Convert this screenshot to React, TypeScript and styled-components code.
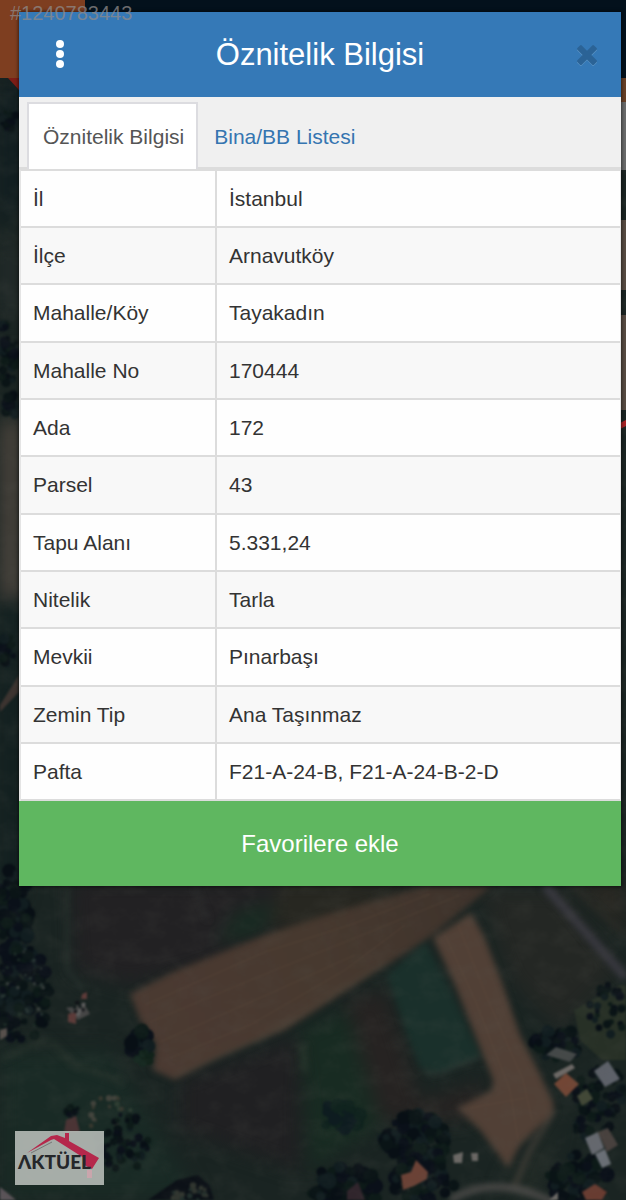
import React from 'react';
import styled, { createGlobalStyle } from 'styled-components';

const GlobalStyle = createGlobalStyle`
  * { box-sizing: border-box; }
  body { margin: 0; background: #171d1d; font-family: 'Liberation Sans', Arial, sans-serif; }
`;

const Page = styled.div`
  position: relative;
  min-height: 100vh;
  overflow: hidden;
  padding: 12px 5px 0 19px;
`;

const MapSvg = styled.svg`
  position: absolute;
  inset: 0;
  width: 100%;
  height: 100%;
`;

const ListingNumber = styled.span`
  position: absolute;
  z-index: 2;
  top: 2px;
  left: 10px;
  font-size: 20px;
  line-height: 23px;
  color: rgba(142, 138, 138, 0.75);
`;

const Dialog = styled.section`
  position: relative;
  background: #fff;
  box-shadow: 0 0 3px 1px rgba(0, 0, 0, 0.5);
`;

const Header = styled.header`
  display: grid;
  grid-template-columns: 1fr auto 1fr;
  align-items: center;
  height: 85px;
  padding: 0 20px;
  background: #3579b7;
`;

const Title = styled.h1`
  margin: 0;
  font-size: 31px;
  line-height: 40px;
  font-weight: 400;
  color: #fff;
`;

const IconButton = styled.button<{ $side: 'start' | 'end' }>`
  display: flex;
  justify-self: ${(p) => p.$side};
  padding: ${(p) => (p.$side === 'start' ? '0 6px' : '0')};
  border: 0;
  background: none;
  cursor: pointer;
`;

const TabBar = styled.nav`
  display: flex;
  height: 72px;
  padding: 5px 8px 0;
  border-bottom: 2px solid #dcdcdc;
  background: #f0f0f0;
`;

const Tab = styled.button<{ $active?: boolean }>`
  height: 67px;
  padding: 0 12px 0 14px;
  border: 2px solid ${(p) => (p.$active ? '#dcdce0' : 'transparent')};
  border-bottom: 0;
  background: ${(p) => (p.$active ? '#fff' : 'transparent')};
  color: ${(p) => (p.$active ? '#555' : '#3575b0')};
  font: inherit;
  font-size: 21px;
  cursor: pointer;
`;

const Table = styled.table`
  width: 100%;
  border-collapse: separate;
  border-spacing: 0;
  border-top: 2px solid #dcdcdc;
  border-left: 2px solid #e4e4e4;
  border-right: 1px solid #e4e4e4;
  font-size: 21px;
  line-height: 24px;
  color: #333;
`;

const Row = styled.tr`
  height: 57px;
  background: #fefefe;
  &:nth-child(even) { background: #f8f8f8; }
  &:nth-child(3n) { height: 58px; }
`;

const Label = styled.th`
  width: 196px;
  padding: 0 12px;
  border-right: 2px solid #dcdcdc;
  border-bottom: 2px solid #dcdcdc;
  font-weight: 400;
  text-align: left;
`;

const Value = styled.td`
  padding: 0 12px;
  border-bottom: 2px solid #dcdcdc;
`;

const FavoriteButton = styled.button`
  display: block;
  width: 100%;
  height: 85px;
  padding: 0;
  border: 0;
  background: #5fb760;
  color: #fff;
  font: inherit;
  font-size: 24px;
  cursor: pointer;
`;

const Badge = styled.div`
  position: absolute;
  left: 15px;
  bottom: 15px;
  width: 89px;
  height: 54px;
  background: rgba(190, 195, 190, 0.86);
`;

const rows: [string, string][] = [
  ['İl', 'İstanbul'],
  ['İlçe', 'Arnavutköy'],
  ['Mahalle/Köy', 'Tayakadın'],
  ['Mahalle No', '170444'],
  ['Ada', '172'],
  ['Parsel', '43'],
  ['Tapu Alanı', '5.331,24'],
  ['Nitelik', 'Tarla'],
  ['Mevkii', 'Pınarbaşı'],
  ['Zemin Tip', 'Ana Taşınmaz'],
  ['Pafta', 'F21-A-24-B, F21-A-24-B-2-D'],
];

type GroveProps = { cx: number; cy: number; rx: number; ry: number; count: number; size: number; seed: number; colors?: string[] };

const treeColors = ['#080f15', '#0a1416', '#0d1a18', '#111d20', '#0a1019'];

// Scatters tree crowns over an ellipse, the same way on every render.
function Grove({ cx, cy, rx, ry, count, size, seed, colors = treeColors }: GroveProps) {
  let state = seed;
  const next = () => {
    state = (state * 16807) % 2147483647;
    return state / 2147483647;
  };
  next();
  const trees = Array.from({ length: count }, (_, i) => {
    const angle = next() * Math.PI * 2;
    const reach = Math.sqrt(next());
    return (
      <circle
        key={i}
        cx={cx + Math.cos(angle) * rx * reach}
        cy={cy + Math.sin(angle) * ry * reach}
        r={size * (0.5 + next() * 0.6)}
        fill={colors[i % colors.length]}
      />
    );
  });
  return <g>{trees}</g>;
}

function SatelliteMap() {
  return (
    <MapSvg viewBox="0 0 626 1200" preserveAspectRatio="xMidYMin slice" aria-hidden="true">
      <defs>
        <filter id="soft" x="-20%" y="-20%" width="140%" height="140%" colorInterpolationFilters="sRGB"><feGaussianBlur stdDeviation="9" /></filter>
        <filter id="edge" x="-10%" y="-10%" width="120%" height="120%" colorInterpolationFilters="sRGB"><feGaussianBlur stdDeviation="3" /></filter>
        <filter id="fine" x="-10%" y="-10%" width="120%" height="120%" colorInterpolationFilters="sRGB"><feGaussianBlur stdDeviation="1" /></filter>
        <filter id="grain" x="0" y="0" width="100%" height="100%" colorInterpolationFilters="sRGB">
          <feTurbulence type="fractalNoise" baseFrequency="0.043 0.057" numOctaves="4" seed="5" />
          <feColorMatrix values="0 0 0 0 0.36  0 0 0 0 0.36  0 0 0 0 0.33  1.6 0 0 0 -0.65" />
        </filter>
        <linearGradient id="field" x1="140" y1="1040" x2="500" y2="880" gradientUnits="userSpaceOnUse">
          <stop offset="0" stopColor="#4b3a32" />
          <stop offset="0.5" stopColor="#47392f" />
          <stop offset="1" stopColor="#3d322b" />
        </linearGradient>
      </defs>
      <rect width="626" height="1200" fill="#1a2422" />
      <g filter="url(#soft)">
        <path d="M0 80H22V200L0 240Z" fill="#101d20" />
        <path d="M0 240H22V320H0Z" fill="#222a29" />
        <path d="M0 420H22V600H0Z" fill="#49433c" />
        <path d="M0 600H22V900H0Z" fill="#122020" />
        <path d="M70 880H320L270 950L130 985L75 970Z" fill="#222123" />
        <path d="M235 912L275 900L265 935L215 945Z" fill="#182a22" />
        <path d="M280 880H430L310 945L270 925Z" fill="#272721" />
        <path d="M180 1080L300 1035V1170L180 1130Z" fill="#202022" />
        <path d="M0 1050H110L200 1200H0Z" fill="#192a25" />
        <path d="M300 1030L350 1010L390 1120L310 1170Z" fill="#182b22" />
        <path d="M345 1000L385 990L420 1100L490 1080L470 1120L380 1120Z" fill="#262322" />
        <path d="M480 890H560L620 970L560 1030L510 980Z" fill="#242724" />
        <path d="M560 1120L540 1200H500L510 1170Z" fill="#202925" />
        <path d="M570 880H626V940Z" fill="#282722" />
      </g>
      <g filter="url(#edge)">
        <path d="M130 994L175 971L265 935L325 915L425 886H492L430 937L390 963L340 995L285 1030L230 1052L175 1080L153 1070L156 1045L140 1020Z" fill="url(#field)" />
        <path d="M433 938L471 913L484 936L503 985L520 1035L538 1070L554 1104L551 1115L520 1145L508 1168L480 1130L457 1108L492 1090L493 1080L475 1035L455 985Z" fill="#514036" />
        <path d="M387 975L425 942L448 985L480 1055L438 1073L420 1068L407 1035Z" fill="#1a302b" />
        <path d="M425 1074L445 1071L480 1056" stroke="#2d3b36" strokeWidth="3" fill="none" />
        <path d="M545 886L626 978" stroke="#38383f" strokeWidth="9" />
        <path d="M572 886L626 935" stroke="#302f2a" strokeWidth="3" />
        <path d="M175 1076L265 1037L340 990L388 962" stroke="#52493e" strokeWidth="2" fill="none" />
        <path d="M67 886V970L84 990" stroke="#26302d" strokeWidth="4" fill="none" />
        <path d="M195 886L208 920" stroke="#303333" strokeWidth="2" />
        <path d="M0 1060L50 1038M52 1042L75 1065L123 1082" stroke="#27332c" strokeWidth="4" fill="none" />
        <path d="M555 1110L530 1150L515 1185" stroke="#46413a" strokeWidth="4" fill="none" />
        <path d="M450 1200Q495 1173 553 1202" stroke="#4b4a48" strokeWidth="7" fill="none" />
        <path d="M303 1045L305 1072" stroke="#29382d" strokeWidth="5" />
      </g>
      <g filter="url(#fine)" stroke="#6b5543" strokeWidth="1" opacity="0.28" fill="none">
        <path d="M145 1005L265 952L350 925L430 894M150 1022L270 972L365 934L460 895M160 1042L280 989L355 955M170 1058L250 1025L345 970L405 925" />
        <path d="M445 935L475 1000L510 1090L518 1140M458 925L488 1000L523 1080L532 1120M470 1108L525 1098" />
      </g>
      <g filter="url(#fine)">
        <path d="M574 1010L620 985H626V1060H602L580 1040Z" fill="#273026" />
        <Grove cx={14} cy={915} rx={15} ry={55} count={80} size={7} seed={17} />
        <Grove cx={23} cy={995} rx={27} ry={48} count={110} size={6} seed={23} />
        <Grove cx={20} cy={992} rx={25} ry={45} count={26} size={2} seed={91} colors={['#273433', '#20302a', '#383f3d']} />
        <Grove cx={140} cy={1043} rx={10} ry={13} count={50} size={7} seed={5} />
        <Grove cx={145} cy={1058} rx={8} ry={6} count={14} size={4} seed={7} colors={['#152820', '#11221a']} />
        <Grove cx={72} cy={1111} rx={9} ry={5} count={12} size={4} seed={8} />
        <Grove cx={110} cy={1120} rx={24} ry={24} count={25} size={3} seed={9} colors={['#38382f', '#2f3e33', '#42433c']} />
        <Grove cx={123} cy={1143} rx={25} ry={31} count={60} size={4} seed={77} />
        <path d="M148 1200L177 1180L198 1175L210 1186L214 1200Z" fill="#0c1117" />
        <Grove cx={188} cy={1194} rx={20} ry={9} count={24} size={3} seed={44} colors={['#22302d', '#30352f']} />
        <Grove cx={340} cy={1117} rx={22} ry={14} count={30} size={7} seed={46} colors={['#0e1c20', '#10231e']} />
        <Grove cx={416} cy={1140} rx={33} ry={26} count={85} size={7} seed={13} />
        <Grove cx={424} cy={1180} rx={32} ry={22} count={50} size={7} seed={15} />
        <Grove cx={345} cy={1188} rx={35} ry={22} count={60} size={8} seed={29} />
        <Grove cx={557} cy={1042} rx={24} ry={18} count={50} size={6} seed={31} />
        <Grove cx={608} cy={1010} rx={21} ry={26} count={32} size={4} seed={71} />
        <Grove cx={600} cy={1095} rx={26} ry={28} count={48} size={5} seed={73} />
        <Grove cx={579} cy={1178} rx={31} ry={24} count={70} size={7} seed={37} />
        <Grove cx={592} cy={1130} rx={18} ry={16} count={24} size={5} seed={38} />
        <path d="M403 1190L401 1175L411 1172L416 1160L428 1172L427 1179L414 1186Z" fill="#6b4236" />
        <path d="M347 1191L358 1182L365 1200H347Z" fill="#30252c" />
        <path d="M554 1084L566 1073L579 1084L566 1097Z" fill="#724635" />
        <path d="M553 1074L572 1064L575 1068L556 1079Z" fill="#6d6966" />
        <path d="M546 1055L556 1047L577 1054L570 1062Z" fill="#444848" />
        <path d="M594 1071L608 1061L620 1079L605 1087Z" fill="#5d6169" />
        <path d="M585 1138L598 1132L604 1148L592 1155Z" fill="#666970" />
        <path d="M595 1154L605 1149L611 1164L602 1168Z" fill="#6a6f76" />
        <path d="M598 1132L608 1128L618 1145L607 1152Z" fill="#48413e" />
        <path d="M582 1192L595 1184L607 1192L602 1200H586Z" fill="#693b30" />
        <path d="M549 1200L558 1192V1200M471 1153H478V1161H472ZM453 1155L463 1152L462 1163H454Z" fill="#6b6865" />
        <path d="M577 1096L587 1089L593 1099L582 1106Z" fill="#424837" />
        <path d="M66 1008L84 1004L90 1014L78 1020Z" fill="#464646" />
        <path d="M68 1014L76 1012V1024L68 1022ZM82 994L87 992V999H81Z" fill="#5c3b39" />
        <Grove cx={79} cy={1008} rx={10} ry={7} count={12} size={2} seed={83} colors={['#10191a', '#5e5e5e', '#101216']} />
        <path d="M66 1120L76 1116L80 1132H64Z" fill="#4b3435" />
        <path d="M0 1030L7 1028V1036L0 1040Z" fill="#57504c" />
        <path d="M0 1187L16 1200H0Z" fill="#5a5358" />
        <Grove cx={8} cy={120} rx={12} ry={9} count={18} size={4} seed={3} />
        <Grove cx={7} cy={354} rx={10} ry={35} count={35} size={5} seed={4} />
        <Grove cx={12} cy={405} rx={7} ry={14} count={20} size={5} seed={6} />
        <Grove cx={8} cy={650} rx={8} ry={14} count={20} size={5} seed={10} />
        <path d="M0 705L19 675V692L0 712Z" fill="#3c3430" />
      </g>
      <rect width="626" height="1200" filter="url(#grain)" opacity="0.16" />
      <path d="M0 0H626V78H0Z" fill="#03111c" />
      <path d="M0 0H85V78H0Z" fill="#7e3e20" />
      <path d="M8 78H19V90Z" fill="#7d1d16" />
      <path d="M620 78H626V102H620Z" fill="#674027" />
      <path d="M620 102H626V170H620Z" fill="#6a6b6b" />
      <path d="M620 220H626V290H620ZM620 315H626V410H620Z" fill="#574b42" />
      <path d="M620 423L626 420V426L620 429Z" fill="#a82225" />
    </MapSvg>
  );
}

function DotsIcon() {
  return (
    <svg width="30" height="34" viewBox="0 0 30 34" fill="#fff" aria-hidden="true">
      <circle cx="15" cy="6" r="4" />
      <circle cx="15" cy="16" r="4" />
      <circle cx="15" cy="26" r="4" />
    </svg>
  );
}

function CloseIcon() {
  const cross = 'M3 6L6 3Q7 2 8 3L14 9L20 3Q21 2 22 3L25 6Q26 7 25 8L19 14L25 20Q26 21 25 22L22 25Q21 26 20 25L14 19L8 25Q7 26 6 25L3 22Q2 21 3 20L9 14L3 8Q2 7 3 6Z';
  return (
    <svg width="28" height="28" viewBox="0 0 32 32" aria-hidden="true">
      <path d={cross} transform="translate(2 3)" fill="#5a93c4" />
      <path d={cross} transform="translate(2 2)" fill="#2b6396" />
    </svg>
  );
}

function AgencyLogo() {
  return (
    <svg width="89" height="54" viewBox="0 0 89 54" role="img" aria-label="AKTÜEL">
      <path d="M12 22L36 5L42 4L50 7V2H54V10L84 27L77 38L69 34V27L39 8L36 9Z" fill="#b5274b" />
      <path d="M16 22L37 11" stroke="#777" strokeWidth="1" />
      <path d="M72 39H77V47H72Z" fill="#c9a5ac" />
      <text x="3" y="38" fontFamily="Lato, sans-serif" fontSize="19" fontWeight="900" fill="#25272a">ΛKTÜEL</text>
    </svg>
  );
}

export default function App() {
  return (
    <Page>
      <GlobalStyle />
      <SatelliteMap />
      <ListingNumber>#1240783443</ListingNumber>
      <Dialog aria-labelledby="dialog-title">
        <Header>
          <IconButton type="button" aria-label="Menü" $side="start"><DotsIcon /></IconButton>
          <Title id="dialog-title">Öznitelik Bilgisi</Title>
          <IconButton type="button" aria-label="Kapat" $side="end"><CloseIcon /></IconButton>
        </Header>
        <TabBar>
          <Tab type="button" $active>Öznitelik Bilgisi</Tab>
          <Tab type="button">Bina/BB Listesi</Tab>
        </TabBar>
        <Table>
          <tbody>
            {rows.map(([label, value]) => (
              <Row key={label}>
                <Label scope="row">{label}</Label>
                <Value>{value}</Value>
              </Row>
            ))}
          </tbody>
        </Table>
        <FavoriteButton type="button">Favorilere ekle</FavoriteButton>
      </Dialog>
      <Badge><AgencyLogo /></Badge>
    </Page>
  );
}
